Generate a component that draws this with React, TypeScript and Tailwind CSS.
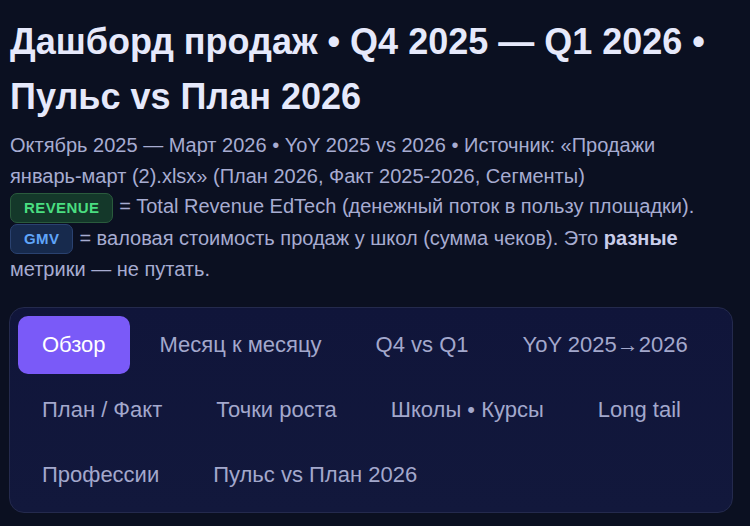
import React from "react";

const tabs = [
  "Обзор",
  "Месяц к месяцу",
  "Q4 vs Q1",
  "YoY 2025→2026",
  "План / Факт",
  "Точки роста",
  "Школы • Курсы",
  "Long tail",
  "Профессии",
  "Пульс vs План 2026",
];

export default function App() {
  return (
    <div
      className="min-h-[526px] bg-[#0b1021] pl-[9px] pr-[17px] pt-[14px] pb-[10px] text-[#e7e9fb]"
      style={{ fontFamily: '"Liberation Sans", Arial, sans-serif' }}
    >
      <h1 className="pl-px text-[36px] font-bold leading-[55px] text-[#e6e9fb]">
        Дашборд продаж • Q4 2025 — Q1 2026 • Пульс vs План 2026
      </h1>

      <div className="mt-[6px] pl-px text-[20px] leading-[30.5px] text-[#a7acd1]">
        <p>
          Октябрь 2025 — Март 2026 • YoY 2025 vs 2026 • Источник: «Продажи{" "}
          <span className="whitespace-nowrap">январь-март</span> (2).xlsx» (План 2026, Факт 2025-2026, Сегменты)
        </p>
        <p>
          <span className="mr-[6px] inline-block h-[30px] rounded-[7px] border border-[#2a5b3d] bg-[#14382a] px-[13px] align-middle text-[15px] font-bold leading-[28px] tracking-[0.4px] text-[#4ade80]">
            REVENUE
          </span>
          = Total Revenue EdTech (денежный поток в пользу площадки).
        </p>
        <p>
          <span className="mr-[6px] inline-block h-[30px] rounded-[7px] border border-[#2a4270] bg-[#172a4d] px-[13px] align-middle text-[15px] font-bold leading-[28px] tracking-[0.4px] text-[#60a5fa]">
            GMV
          </span>
          = валовая стоимость продаж у школ (сумма чеков). Это <b className="text-[#c9cdea]">разные</b> метрики — не
          путать.
        </p>
      </div>

      <nav className="mt-[22px] flex flex-wrap gap-x-[6px] gap-y-[7px] rounded-[15px] border border-[#242a4d] bg-gradient-to-b from-[#10153a] to-[#12183c] p-[8px]">
        {tabs.map((t, i) => (
          <button
            key={t}
            className={
              i === 0
                ? "h-[58px] rounded-[10px] bg-[#7a5af8] px-[24px] text-[22px] text-white"
                : "h-[58px] rounded-[10px] px-[24px] text-[22px] text-[#a3a8cc]"
            }
          >
            {t}
          </button>
        ))}
      </nav>
    </div>
  );
}
